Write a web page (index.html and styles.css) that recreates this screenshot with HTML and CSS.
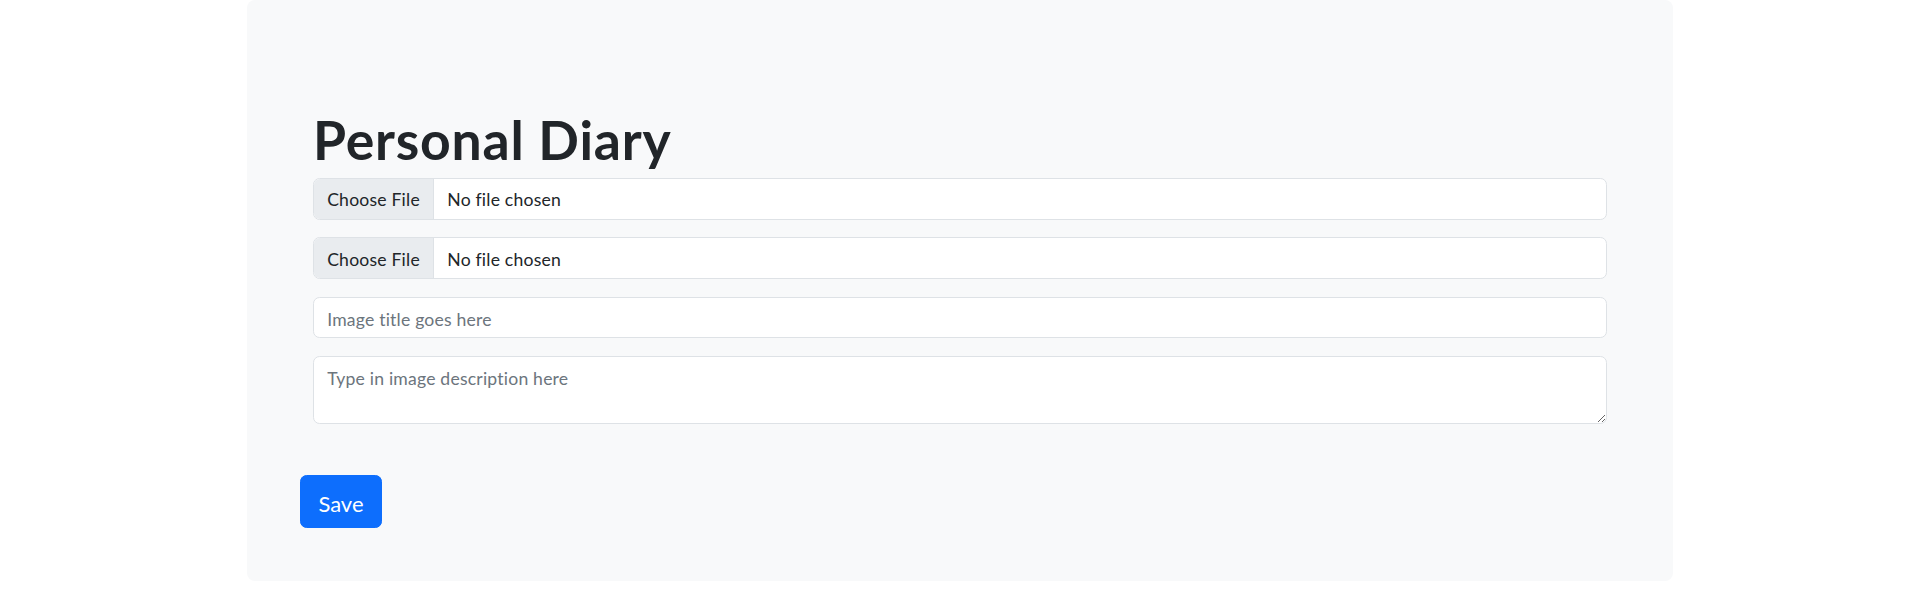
FILE: index.html
```html
<!DOCTYPE html>
<html lang="en">
<head>
<meta charset="utf-8">
<title>Personal Diary</title>
<link rel="stylesheet" href="styles.css">
</head>
<body>
<main class="panel">
  <form class="diary-form">
    <div class="inner">
      <h1 class="title">Personal Diary</h1>
      <div class="field file-field">
        <span class="file-btn">Choose File</span>
        <span class="file-name">No file chosen</span>
      </div>
      <div class="field file-field">
        <span class="file-btn">Choose File</span>
        <span class="file-name">No file chosen</span>
      </div>
      <input class="field text-input" type="text" placeholder="Image title goes here">
      <textarea class="field text-area" rows="2" placeholder="Type in image description here"></textarea>
    </div>
    <button class="save-btn" type="button">Save</button>
  </form>
</main>
</body>
</html>
```

FILE: styles.css
```css
* { box-sizing: border-box; }
html, body { margin: 0; padding: 0; background: #fff; }
body {
  font-family: Lato, "Noto Sans", sans-serif;
  color: #212529;
  font-size: 17.6px;
  line-height: 1.5;
}
.panel {
  width: 1426px;
  margin: 0 auto;
  background: #f8f9fa;
  border-radius: 8px;
  padding: 52.8px;
}
.diary-form { display: flex; flex-direction: column; align-items: flex-start; }
.inner { width: 100%; padding: 0 13.2px; display: flex; flex-direction: column; }
.title {
  font-size: 53.5px;
  font-weight: 700;
  letter-spacing: 0.8px;
  line-height: 63.4px;
  margin: 55px 0 6.6px;
  color: #212529;
}
.field {
  width: 100%;
  margin: 0 0 17.6px;
  border: 1px solid #dee2e6;
  border-radius: 6.6px;
  background: #fff;
  font-family: inherit;
  font-size: 17.6px;
  letter-spacing: 0.2px;
  line-height: 26.4px;
  color: #212529;
}
.file-field {
  display: flex;
  align-items: stretch;
  height: 41.8px;
  overflow: hidden;
}
.file-btn {
  background: #e9ecef;
  padding: 8.6px 13.2px 4.6px;
  border-right: 1px solid #dee2e6;
  color: #212529;
}
.file-name { padding: 8.6px 13.2px 4.6px; }
.text-input { height: 41.8px; padding: 8.6px 13.2px 4.6px; outline: none; }
.text-area { height: 68.2px; padding: 8.6px 13.2px 4.6px; resize: vertical; outline: none; display: block; }
.field::placeholder { color: #6c757d; opacity: 1; }
.save-btn {
  margin-top: 33.6px;
  height: 52.8px;
  padding: 3px 17.6px 0;
  background: #0d6efd;
  color: #fff;
  border: 1px solid #0d6efd;
  border-radius: 6.6px;
  font-family: inherit;
  font-size: 22px;
  line-height: 1.5;
  cursor: pointer;
}
```
